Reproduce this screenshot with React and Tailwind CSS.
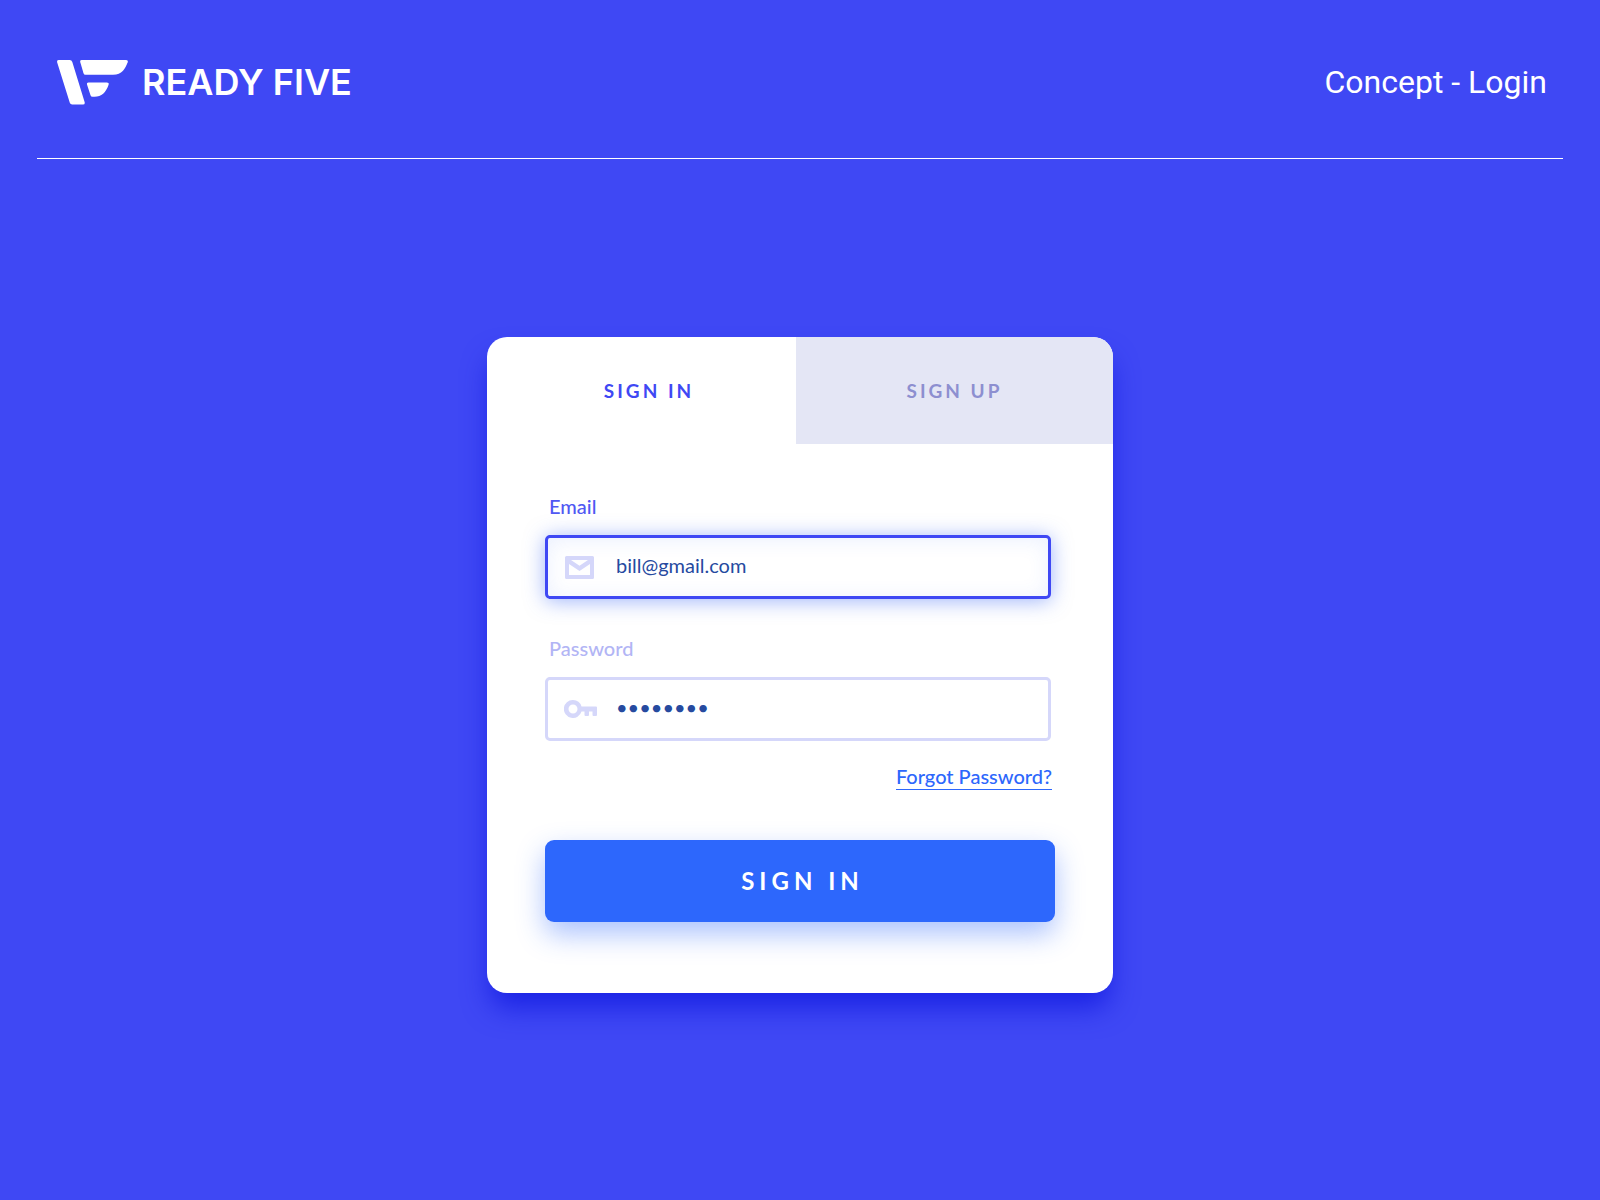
import React, { useState } from "react";

function LogoMark() {
  return (
    <svg viewBox="0 0 71 45" className="h-[45px] w-[71px]" fill="#fff" aria-hidden="true">
      <path d="M1.8 0H12.7Q14.7 0 15.3 2L27.6 42Q28.3 44.6 26 44.6H15.200Q13.400 44.6 12.8 42.8L.2 2.400Q-.4 0 1.800 0Z" />
      <path d="M24.800 0H68.600Q71.600 0 70.600 2.600C68.200 8.800 65 14.800 56 14.800H28.400Q27 14.800 26.500 13.300L23.300 2.200Q22.700 0 24.800 0Z" />
      <path d="M31.400 22.600H49.700Q52.300 22.600 51.600 24.800C49 32.500 44.500 36.800 37.500 36.800H35.600Q34 36.800 33.500 35.200L30 24.600Q29.400 22.600 31.400 22.600Z" />
    </svg>
  );
}

function MailIcon() {
  return (
    <svg viewBox="0 0 29 23" className="h-[23px] w-[29px]" fill="#d5d7fa" aria-hidden="true">
      <path fillRule="evenodd" d="M1.500 0H27.500Q29 0 29 1.500V21.500Q29 23 27.500 23H1.500Q0 23 0 21.500V1.500Q0 0 1.500 0ZM4 8V19H25V8L14.500 15ZM6 4L14.500 9.800L23 4Z" />
    </svg>
  );
}

function KeyIcon() {
  return (
    <svg viewBox="0 0 33 18" className="h-[18px] w-[33px]" fill="#d5d7fa" aria-hidden="true">
      <path fillRule="evenodd" d="M9 0A9 9 0 0 1 17.500 6.500H32Q33 6.500 33 7.500V15Q33 16 32 16H29.500Q28.500 16 28.500 15V11.500H25V15Q25 16 24 16H21.500Q20.500 16 20.500 15V11.500H17.500A9 9 0 1 1 9 0ZM9 4.500A4.500 4.500 0 1 0 9 13.500A4.500 4.500 0 1 0 9 4.500Z" />
    </svg>
  );
}

export default function App() {
  const [email, setEmail] = useState("bill@gmail.com");
  const [password, setPassword] = useState("password");
  return (
    <div className="min-h-screen bg-[#3f48f4] px-[37px] pb-40 font-['Lato',sans-serif]">
      <header className="flex items-center justify-between border-b border-white pt-[60px] pr-4 pb-[53px] pl-5">
        <div className="flex items-center gap-[14px]">
          <LogoMark />
          <span className="font-['Inter',sans-serif] text-[36px] leading-[45px] font-semibold text-white">READY FIVE</span>
        </div>
        <span className="font-['Roboto',sans-serif] text-[32px] leading-[45px] text-white">Concept - Login</span>
      </header>

      <main className="mx-auto mt-[178px] w-full max-w-[626px] rounded-[20px] bg-white shadow-[0_18px_28px_-4px_#1a22e4]">
        <div role="tablist" className="flex h-[107px] overflow-hidden rounded-t-[20px] text-[19px] leading-6 font-bold tracking-[3px]">
          <button type="button" role="tab" aria-selected="true" className="w-[309px] pl-[15px] text-[#3f48f4]">SIGN IN</button>
          <button type="button" role="tab" aria-selected="false" className="flex-1 bg-[#e4e6f5] text-[#8d8fd0]">SIGN UP</button>
        </div>

        <form className="px-[58px] pt-[49px] pb-[71px]" onSubmit={(e) => e.preventDefault()}>
          <label htmlFor="email" className="ml-1 block text-[20px] leading-[26px] font-medium text-[#5058f3]">Email</label>
          <div className="mt-4 mr-1 flex h-16 items-center rounded-[5px] border-3 border-[#3f48f4] pl-[17px] shadow-[0_2px_20px_#3f6cf880,inset_0_2px_20px_#3f6cf81a]">
            <MailIcon />
            <input id="email" type="email" value={email} onChange={(e) => setEmail(e.target.value)} className="ml-[22px] h-full min-w-0 flex-1 bg-transparent pb-1 text-[20px] text-[#264a9f] outline-none" />
          </div>

          <label htmlFor="password" className="mt-9 ml-1 block text-[20px] leading-[26px] font-medium text-[#b2b5f5]">Password</label>
          <div className="mt-4 mr-1 flex h-16 items-center rounded-[5px] border-3 border-[#d5d7fa] pl-4">
            <KeyIcon />
            <input id="password" type="password" value={password} onChange={(e) => setPassword(e.target.value)} className="ml-[19px] h-full min-w-0 flex-1 bg-transparent pb-1 text-[20px] text-[#264a9f] outline-none" />
          </div>

          <div className="mt-[22px] mr-[3px] flex justify-end">
            <a href="#forgot" className="border-b border-[#2d67fc] text-[20px] leading-[26px] font-medium text-[#2d67fc]">Forgot Password?</a>
          </div>

          <button type="submit" className="mt-[50px] block h-[82px] w-full rounded-[9px] bg-[#2d67fc] pl-[5px] text-[24px] leading-8 font-bold tracking-[5px] text-white shadow-[0_12px_28px_#2d67fc66]">SIGN IN</button>
        </form>
      </main>
    </div>
  );
}
